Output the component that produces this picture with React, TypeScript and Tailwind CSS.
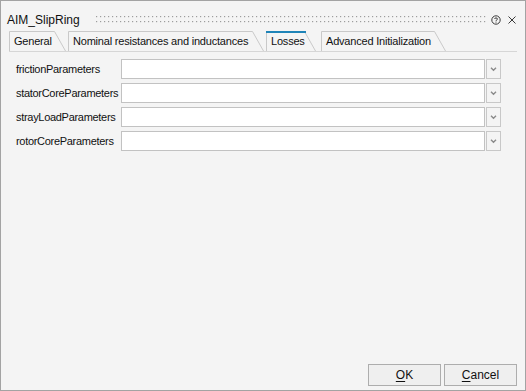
import { type ReactNode } from "react";

const FONT = "font-['Liberation_Sans',Arial,sans-serif]";

const Tab = ({ width, selected, children, className }: { width: number; selected?: boolean; children: ReactNode; className?: string }) => {
  return (
    <div className={`relative h-[20px] shrink-0 flex items-center pl-[5px] pt-[1px] ${className ?? ""}`} style={{ width }}>
      <svg className="absolute left-0 top-0" width={width} height={20}>
        <path d={`M0.5 20 V0.5 H${width - 11.5} L${width - 0.5} 20`} fill="none" stroke="#c9c9c9" />
        {selected && <rect x={0} y={0} width={width - 10} height={2} fill="#1f84b8" />}
      </svg>
      <span className="relative text-[11px] tracking-[-0.2px] text-[#111]">{children}</span>
    </div>
  )
}

const Chevron = () => (
  <svg width={7} height={5} viewBox="0 0 7 5">
    <path d="M1 0.8 L3.5 3.3 L6 0.8" fill="none" stroke="#8a8a8a" strokeWidth={1.4} />
  </svg>
)

const ParamRow = ({ label }: { label: string }) => {
  return (
    <div className="flex items-center h-[20px]">
      <span className="w-[105px] shrink-0 text-[11px] tracking-[-0.3px] text-[#111]">{label}</span>
      <div className="flex-1 h-full bg-white border border-[#c2c2c2]" />
      <div className="w-[15px] h-full ml-px border border-[#c8c8c8] bg-[#f4f4f4] flex items-center justify-center">
        <Chevron />
      </div>
    </div>
  )
}

const DialogButton = ({ children }: { children: ReactNode }) => (
  <button
    type="button"
    className="w-[73px] h-[22px] border border-[#adadad] bg-[#efefef] text-[12px] text-[#111] flex items-center justify-center"
  >
    {children}
  </button>
)

export default function App() {
  return (
    <div className={`w-[526px] h-[391px] border border-[#a3a3a3] bg-[#f4f4f4] flex flex-col ${FONT}`}>
      <div className="h-[30px] flex items-center pl-[6px] pr-[9px] pt-[7px]">
        <span className="text-[12px] text-[#111] leading-none">AIM_SlipRing</span>
        <div className="ml-[16px] flex-1 h-[7px]">
          <svg width="100%" height={7} className="block">
            <defs>
              <pattern id="grip" x={0} y={0} width={4} height={5} patternUnits="userSpaceOnUse">
                <rect x={0} y={0} width={1.2} height={1.2} fill="#9d9d9d" />
              </pattern>
            </defs>
            <rect x={0} y={0} width="100%" height={7} fill="url(#grip)" />
          </svg>
        </div>
        <svg className="ml-[5px]" width={10} height={10} viewBox="0 0 10 10">
          <circle cx={5} cy={5} r={4.2} fill="none" stroke="#3a3a3a" strokeWidth={1} />
          <path d="M3.5 4 C3.5 2.6 6.5 2.6 6.5 4 C6.5 4.9 5 4.9 5 6" fill="none" stroke="#3a3a3a" strokeWidth={1} />
          <rect x={4.5} y={6.6} width={1} height={1} fill="#3a3a3a" />
        </svg>
        <svg className="ml-[7px]" width={8} height={8} viewBox="0 0 8 8">
          <path d="M0.5 0.5 L7.5 7.5 M7.5 0.5 L0.5 7.5" stroke="#3a3a3a" strokeWidth={1} />
        </svg>
      </div>

      <div className="h-[21px] mx-[8px] flex border-b border-[#d6d6d6]">
        <Tab width={57}>General</Tab>
        <Tab width={196} className="ml-[2px]">Nominal resistances and inductances</Tab>
        <Tab width={50} className="ml-[2px]" selected>Losses</Tab>
        <Tab width={125} className="ml-[5px]">Advanced Initialization</Tab>
      </div>

      <div className="flex flex-col gap-[4px] pt-[7px] pl-[15px] pr-[24px]">
        <ParamRow label="frictionParameters" />
        <ParamRow label="statorCoreParameters" />
        <ParamRow label="strayLoadParameters" />
        <ParamRow label="rotorCoreParameters" />
      </div>

      <div className="flex-1" />

      <div className="flex justify-end gap-[3px] pr-[8px] pb-[4px]">
        <DialogButton><span className="underline underline-offset-2">O</span>K</DialogButton>
        <DialogButton><span className="underline underline-offset-2">C</span>ancel</DialogButton>
      </div>
    </div>
  )
}
